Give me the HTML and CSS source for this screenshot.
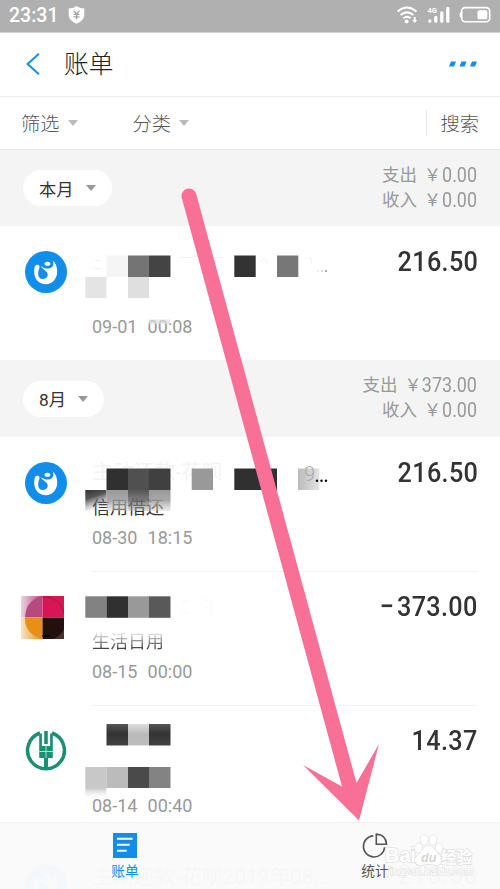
FILE: index.html
```html
<!DOCTYPE html>
<html lang="zh-CN">
<head>
<meta charset="utf-8">
<title>账单</title>
<link rel="stylesheet" href="styles.css">
</head>
<body>
<svg class="defs" width="0" height="0" aria-hidden="true">
  <symbol id="loan" viewBox="0 0 42 42">
    <circle cx="21" cy="21" r="21" fill="#108ee9"/>
    <path d="M27.5 9.3C31 12 32.2 16 32.2 20.5C32.2 28 27 33.3 21 33.3C14 33.3 9.2 28 9.2 21C9.2 17.5 9.6 14 12 13.8C14.6 13.8 14.8 15.5 14.2 17.5C12.6 21.5 12.4 27.8 17.6 28C22.6 28 23.9 23.5 21.7 21C19.8 18.9 17.2 18 15.8 15C19.5 18.2 25.2 18.6 27.8 15C28.9 13 28.3 11 27.5 9.3Z" fill="#fff"/>
    <ellipse cx="22.4" cy="12.8" rx="2.9" ry="2" fill="#fff"/>
  </symbol>
</svg>
<div class="screen">
  <header class="status">
    <span class="clock">23:31</span>
    <svg width="17" height="18" viewBox="0 0 17 18"><path d="M8.5 0Q12 2.6 16.3 2.6V9Q16 14.6 8.5 17.7Q1 14.6.7 9V2.6Q5 2.6 8.5 0Z" fill="#fff"/><path d="M5.6 4.6L8.5 8L11.4 4.6M5.5 8.4H11.5M5.5 10.8H11.5M8.5 8V13.5" fill="none" stroke="#a4a4a4" stroke-width="1.3"/></svg>
    <svg class="signals" width="99" height="20" viewBox="0 0 99 20">
      <g fill="none" stroke="#fff" stroke-width="2"><path d="M1.5 6.5Q11 -1.5 20.5 6.5"/><path d="M4.6 10Q11 4.7 17.4 10"/><path d="M7.4 13.2Q11 10.3 14.6 13.2"/><path d="M18.7 12V16"/></g>
      <circle cx="10.7" cy="16.4" r="1.9" fill="#fff"/><path d="M16.2 15H21.2L18.7 18Z" fill="#fff"/>
      <text x="31.5" y="7.8" class="net">4G</text>
      <path d="M33.8 16V16.2M39.8 12.3V16.2M45.8 8V16.2M51.8 3.5V16.2" stroke="#fff" stroke-width="3.3" stroke-linecap="round"/>
      <rect x="65.7" y="2.6" width="28" height="14.2" rx="3.5" fill="none" stroke="#fff" stroke-width="1.6"/><path d="M65 6.5Q62 9.8 65 13Z" fill="#fff"/><rect x="81.5" y="5.3" width="9.8" height="9" rx="1.5" fill="#fff"/>
    </svg>
  </header>
  <nav class="titlebar">
    <svg width="14" height="22" viewBox="0 0 14 22"><path d="M12.9.8L1.6 11L12.9 21.2" fill="none" stroke="#108ee9" stroke-width="2"/></svg>
    <h1>账单</h1>
    <svg class="more" width="29" height="6" viewBox="0 0 29 6"><path d="M2 .4H7L5 5.6H0ZM12.5 .4H17.5L15.5 5.6H10.5ZM23 .4H28L26 5.6H21Z" fill="#108ee9"/></svg>
  </nav>
  <div class="filters">
    <span class="filter">筛选<i class="caret"></i></span>
    <span class="filter second">分类<i class="caret"></i></span>
    <span class="search">搜索</span>
  </div>

  <section class="month">
    <span class="pill">本月<i class="caret dark"></i></span>
    <div class="totals">
      <div>支出<b>￥</b><em style="width:36px"><span>0.00</span></em></div>
      <div>收入<b>￥</b><em style="width:36px"><span>0.00</span></em></div>
    </div>
  </section>
  <article class="row last">
    <svg class="icon" width="42" height="42"><use href="#loan"/></svg>
    <div class="info"><p class="name"></p><p class="kind"></p><p class="date">09-01&nbsp; 00:08</p></div>
    <strong class="amount">216.50</strong>
    <svg class="mosaic" width="350" height="134">
      <path d="M106.5 29.5H128V51H106.5Z" fill="#f5f5f5"/><path d="M128 29.5H149V51H128Z" fill="#747474"/><path d="M149 29.5H170.5V51H149Z" fill="#444"/>
      <path d="M85.3 51H106.5V72H85.3Z" fill="#e4e4e4"/><path d="M128 51H149V72H128Z" fill="#dfdfdf"/>
      <path d="M234.3 29.5H255.7V51H234.3Z" fill="#333"/><path d="M277 29.5H298.3V51H277Z" fill="#777"/>
      <g fill="#f2f2f2"><path d="M95 34h5v1h-5zM94 42h7v1h-7zM181 31h10v1h-10zM194 30h12v1h-12zM210 31h12v1h-12z"/></g>
      <path d="M261 36Q265 28 267 37M306 33Q311 28 312 38" fill="none" stroke="#f1f1f1"/>
      <path d="M317 44h2v2h-2z" fill="#eee"/><path d="M321 44h2v2h-2z" fill="#ddd"/><path d="M325 44h2v2h-2z" fill="#aaa"/>
      <path d="M149 93.5H170V98H149Z" fill="#ddd" opacity=".65"/>
    </svg>
  </article>

  <section class="month tall">
    <span class="pill">8月<i class="caret dark"></i></span>
    <div class="totals">
      <div>支出<b>￥</b><em style="width:55.5px"><span>373.00</span></em></div>
      <div>收入<b>￥</b><em style="width:36px"><span>0.00</span></em></div>
    </div>
  </section>
  <article class="row">
    <svg class="icon" width="42" height="42"><use href="#loan"/></svg>
    <div class="info"><p class="name faint">主动还款-花呗</p><p class="kind">信用借还</p><p class="date">08-30&nbsp; 18:15</p></div>
    <strong class="amount">216.50</strong>
    <svg class="mosaic" width="350" height="134">
      <defs>
        <linearGradient id="f1" x1="0" y1="0" x2=".35" y2="1"><stop offset="0" stop-color="#333"/><stop offset=".4" stop-color="#555"/><stop offset="1" stop-color="#999" stop-opacity="0"/></linearGradient>
        <linearGradient id="f2" x1="0" y1="0" x2="0" y2="1"><stop offset="0" stop-color="#999"/><stop offset=".5" stop-color="#999" stop-opacity=".85"/><stop offset="1" stop-color="#ccc" stop-opacity=".4"/></linearGradient>
        <linearGradient id="f3" x1="0" y1="0" x2="0" y2="1"><stop offset="0" stop-color="#555"/><stop offset=".5" stop-color="#666" stop-opacity=".85"/><stop offset="1" stop-color="#aaa" stop-opacity=".4"/></linearGradient>
        <linearGradient id="f4"><stop offset="0" stop-color="#bbb"/><stop offset="1" stop-color="#e3e3e3"/></linearGradient>
      </defs>
      <path d="M106.5 31.5H128V53H106.5Z" fill="#303030"/><path d="M128 31.5H149V53H128Z" fill="#505050"/><path d="M149 31.5H170.5V53H149Z" fill="#404040"/>
      <path d="M85.3 53H106.5V74H85.3Z" fill="url(#f1)"/><path d="M106.5 53H128V74H106.5Z" fill="url(#f2)"/><path d="M128 53H149V74H128Z" fill="url(#f3)"/><path d="M149 53H170.5V74H149Z" fill="url(#f2)"/>
      <path d="M191.7 31.5H213V53H191.7Z" fill="#999"/><path d="M234.3 31.5H277V53H234.3Z" fill="#303030"/><path d="M298 31.5H319.3V53H298Z" fill="url(#f4)"/>
      <text x="304" y="43.5" class="nine">9</text>
      <circle cx="317" cy="43.8" r="1.2"/><circle cx="321.5" cy="43.8" r="1.2"/><circle cx="326" cy="43.8" r="1.2"/>
    </svg>
  </article>
  <article class="row">
    <svg class="shop" width="43" height="43" viewBox="0 0 43 43">
      <defs><linearGradient id="pale"><stop offset="0" stop-color="#fff" stop-opacity=".75"/><stop offset="1" stop-color="#fff" stop-opacity="0"/></linearGradient></defs>
      <path d="M0 0H21.5V21.5H0Z" fill="#b6497d"/><path d="M21.5 0H43V21.5H21.5Z" fill="#d81656"/><path d="M0 21.5H21.5V43H0Z" fill="#e79018"/><path d="M21.5 21.5H43V43H21.5Z" fill="#23100e"/>
      <path d="M0 0H21.5Q4 4 4 23Q4 38 21.5 43H0Z" fill="url(#pale)"/><path d="M21.5 .7A20 20 0 0 1 43 17" fill="none" stroke="#a71444"/><path d="M32 43Q40 40 43 33V43Z" fill="#4b302d"/><path d="M21 39h8l-2 2h-5z" fill="#000"/>
    </svg>
    <div class="info"><p class="name"></p><p class="kind fade">生活日用</p><p class="date">08-15&nbsp; 00:00</p></div>
    <strong class="amount"><span class="sign">−</span>373.00</strong>
    <svg class="mosaic" width="350" height="134">
      <path d="M85.3 25.3H106.5V46.8H85.3Z" fill="#828282"/><path d="M106.5 25.3H128V46.8H106.5Z" fill="#303030"/><path d="M128 25.3H149V46.8H128Z" fill="#999"/><path d="M149 25.3H170.5V46.8H149Z" fill="#595959"/>
      <path d="M181 30h8M181 42h8M202 29h9v14M202 36h7" fill="none" stroke="#f9f9f9"/>
    </svg>
  </article>
  <article class="row">
    <svg class="icon" width="42" height="42" viewBox="0 0 42 42">
      <path d="M15 3A18.4 18.4 0 1 0 27 3" fill="none" stroke="#199071" stroke-width="3.5"/>
      <path d="M19.2 1H22.8V14H19.2ZM14.2 3.5H16.9V16H25.1V3.5H27.8V28H14.2Z" fill="#199071"/><path d="M19 28H23V40H19Z" fill="#199071"/>
      <path d="M14.2 21.5H28M21 15V28" stroke="#b9ddd2" stroke-width="1"/>
    </svg>
    <div class="info"><p class="name"></p><p class="kind"></p><p class="date">08-14&nbsp; 00:40</p></div>
    <strong class="amount">14.37</strong>
    <svg class="mosaic" width="350" height="134">
      <defs>
        <linearGradient id="g1" x1="0" y1="0" x2="0" y2="1"><stop offset="0" stop-color="#555"/><stop offset=".45" stop-color="#333"/><stop offset="1" stop-color="#414141"/></linearGradient>
        <linearGradient id="g2" x1="0" y1="0" x2="0" y2="1"><stop offset="0" stop-color="#ddd"/><stop offset=".5" stop-color="#b8b8b8"/><stop offset="1" stop-color="#bebebe"/></linearGradient>
        <linearGradient id="g3" x1="0" y1="0" x2="0" y2="1"><stop offset="0" stop-color="#c8c8c8"/><stop offset="1" stop-color="#fff" stop-opacity="0"/></linearGradient>
      </defs>
      <path d="M106.5 19H128V40.5H106.5Z" fill="url(#g1)"/><path d="M128 19H149V40.5H128Z" fill="url(#g2)"/><path d="M149 19H170.5V40.5H149Z" fill="url(#g1)"/>
      <path d="M85.3 62H106.5V83H85.3Z" fill="#c8c8c8"/><path d="M106.5 62H128V83H106.5Z" fill="#bbb"/><path d="M128 62H149V83H128Z" fill="#4a4a4a"/><path d="M149 62H170.5V83H149Z" fill="#838383"/><path d="M85.3 83H106.5V95H85.3Z" fill="url(#g3)"/>
    </svg>
  </article>
  <article class="row last">
    <svg class="icon" width="42" height="42"><use href="#loan"/></svg>
    <div class="info"><p class="name">主动还款-花呗2019年08...</p></div>
    <strong class="amount">216.50</strong>
  </article>

  <footer class="tabs">
    <div class="tab active">
      <svg width="24" height="25" viewBox="0 0 24 25"><path d="M0 0H24V25H0Z" fill="#108ee9"/><path d="M4 5.8H19.5M4 11.8H16.7M4 17.8H13.7" stroke="#fff" stroke-width="2"/></svg>
      <span>账单</span>
    </div>
    <div class="tab">
      <svg width="26" height="25" viewBox="0 0 26 25"><path d="M11.4 2.8A10.6 10.6 0 1 0 22.6 14.2" fill="none" stroke="#555" stroke-width="1.6"/><path d="M14.3 1.1Q24 1.6 24.5 11.3H14.3Z" fill="none" stroke="#555" stroke-width="1.6"/></svg>
      <span>统计</span>
    </div>
  </footer>

  <svg class="arrow" width="500" height="889" viewBox="0 0 500 889"><path d="M181.8 198A7.4 7.4 0 0 1 196.2 194L356.5 783L379 744L359 820.5L303 765L342 786.5Z" fill="#f87096"/></svg>
  <svg class="watermark" width="100" height="60" viewBox="0 0 100 60">
    <g class="outline"><text x="5" y="36" class="brand" textLength="31" lengthAdjust="spacingAndGlyphs">Bai</text>
    <ellipse cx="38.5" cy="22" rx="3.6" ry="4.8"/><ellipse cx="44" cy="14" rx="3.6" ry="4.8"/><ellipse cx="53" cy="14" rx="3.6" ry="4.8"/><ellipse cx="59" cy="22" rx="3.6" ry="4.8"/><path d="M48.5 20C54 20 56 26 60 30C65 35 60 40 55 39Q48.5 37 42 39C36 40 32 35 38 29C42 26 43 20 48.5 20Z"/>
    <text x="61" y="36.5" class="cn">经验</text></g>
    <text x="41" y="36" class="du">du</text>
    <g class="outline"><text x="8" y="49" class="url" textLength="85" lengthAdjust="spacingAndGlyphs">jingyan.baidu.com</text></g>
  </svg>
</div>
</body>
</html>
```
FILE: styles.css
```css
* { box-sizing: border-box; }
body { margin: 0; background: #fff; font-family: Roboto, "Noto Sans CJK SC", sans-serif; color: #333; }
h1, p { margin: 0; font-weight: 400; }
svg { display: block; flex: none; }
.defs { position: absolute; }
.screen { position: relative; width: 500px; height: 889px; overflow: hidden; }

.status { display: flex; align-items: center; height: 33px; padding: 0 5px 2px 9px; background: #b0b0b0; border-bottom: 1px solid #d2d2d2; color: #fff; }
.clock { width: 59px; padding-top: 2px; font-size: 19.5px; font-weight: 500; line-height: 30px; }
.signals { margin-left: auto; }
.net { font: 700 7.5px Roboto, sans-serif; fill: #fff; }

.titlebar { display: flex; align-items: center; height: 64px; padding: 0 22px 2px 26px; border-bottom: 1px solid #ececec; }
.titlebar h1 { margin-left: 24px; padding-top: 2px; font-size: 24.7px; font-weight: 300; line-height: 36px; color: #222; }
.more { margin-left: auto; }

.filters { display: flex; align-items: center; height: 53px; padding: 0 21px; border-bottom: 1px solid #e8e8e8; font-size: 19.3px; font-weight: 300; color: #555; }
.filter { display: flex; align-items: center; }
.second { margin-left: 55px; }
.caret { width: 0; height: 0; margin-left: 8px; border: 5px solid transparent; border-top: 6px solid #bbb; border-bottom: 0; }
.caret.dark { margin-left: 12px; border-top-color: #999; }
.search { display: flex; align-items: center; height: 26px; margin-left: auto; padding-left: 13px; border-left: 1px solid #e7e7e7; }

.month { display: flex; justify-content: space-between; align-items: center; height: 76px; padding: 0 23px; background: #f4f4f4; }
.month.tall { height: 77px; }
.pill { display: flex; align-items: center; height: 36px; padding: 0 16px; border-radius: 18px; background: #fff; font-size: 17.3px; color: #333; }
.totals { padding-bottom: 1px; font-size: 17.5px; line-height: 25px; color: #999; }
.totals div { display: flex; justify-content: flex-end; height: 25px; }
.totals b { margin: 0 0 0 7px; font-weight: 400; font-size: 17px; }
.totals em { display: flex; justify-content: flex-end; font-style: normal; font-size: 19.5px; }
.totals em span { transform: scaleX(.92); transform-origin: right; }

.row { position: relative; display: flex; align-items: flex-start; height: 134px; padding: 0 23px 0 25px; }
.row:not(.last)::after { content: ""; position: absolute; left: 92px; right: 22px; bottom: -1px; height: 1px; background: #f3f3f3; }
.icon { margin-top: 25px; }
.shop { margin: 25px 3px 0 -4px; }
.info { flex: 1; margin-left: 25px; padding-top: 21px; }
.name { height: 34px; font-size: 20.8px; line-height: 34px; white-space: nowrap; }
.faint { color: #f3f3f3; line-height: 28px; }
.kind { height: 32px; font-size: 18px; line-height: 31px; }
.fade { color: transparent; background: linear-gradient(#fff 15%, #333 75%); background-clip: text; -webkit-background-clip: text; }
.date { font-size: 18px; line-height: 27px; word-spacing: .6px; color: #999; }
.amount { margin: 19px -1px 0 0; font-size: 28.5px; line-height: 34px; font-weight: 500; letter-spacing: .4px; white-space: nowrap; transform: scaleX(.885); transform-origin: right; }
.sign { margin-right: 3px; }
.mosaic { position: absolute; left: 0; top: 0; }
.nine { font: 300 20px Roboto, sans-serif; fill: #aaa; }

.tabs { position: absolute; left: 0; bottom: 0; display: flex; width: 100%; height: 67px; background: rgba(250, 250, 250, .98); border-top: 1px solid #f0f0f0; }
.tab { flex: 1; display: flex; flex-direction: column; align-items: center; padding-top: 10px; font-size: 13.7px; line-height: 20px; color: #555; }
.tab span { margin-top: 3px; }
.active { color: #108ee9; }
.arrow { position: absolute; left: 0; top: 0; }
.watermark { position: absolute; left: 380px; top: 826px; }
.outline { fill: #fff; stroke: #e0e0e0; stroke-width: 1.5; paint-order: stroke; }
.brand { font: 700 20px "Liberation Sans", sans-serif; }
.cn { font: 700 15.5px "Noto Sans CJK SC", sans-serif; }
.du { font: italic 700 12.5px "Liberation Sans", sans-serif; fill: #d5d5d5; }
.url { font: 10px "Liberation Sans", sans-serif; stroke-width: 1; }
```
